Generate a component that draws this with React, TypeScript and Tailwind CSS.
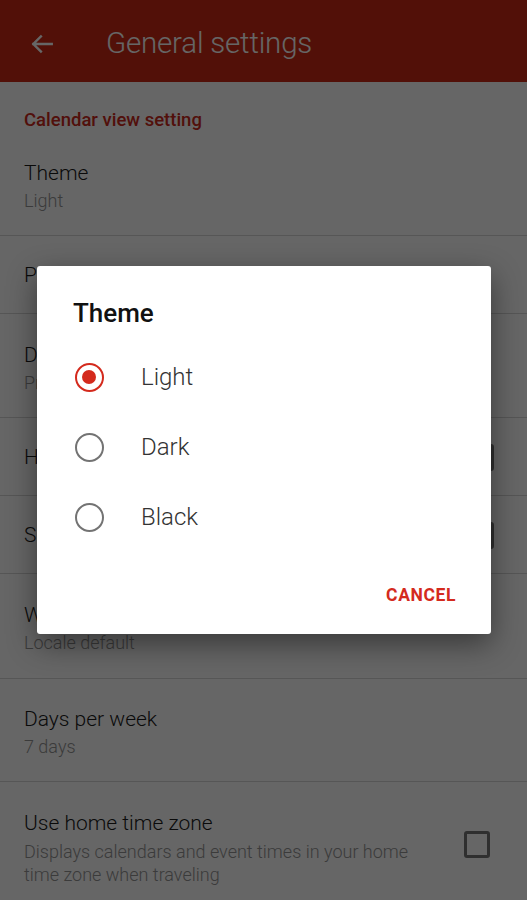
import React from "react";

const font = { fontFamily: "Roboto, 'Liberation Sans', Arial, sans-serif" };

function Row({ title, sub, check, tall }: { title: string; sub?: string; check?: boolean; tall?: string }) {
  return (
    <div className={`flex items-center border-b border-[#d6d6d6] px-6 ${sub ? "pt-[6px]" : "pt-[1px]"} ${tall ?? (sub ? "h-[103px]" : "h-[78px]")}`}>
      <div className="flex flex-1 flex-col justify-center">
        <div className="text-[21px] font-light leading-[28px] text-[#1a1a1a]">{title}</div>
        {sub && <div className="text-[18px] font-light leading-[28px] text-[#949494]">{sub}</div>}
      </div>
      {check && <div className="ml-4 mr-[9px] h-[27px] w-[26px] rounded-[3px] border-[3px] border-[#757575]" />}
    </div>
  );
}

function Radio({ selected, label }: { selected?: boolean; label: string }) {
  return (
    <div className="flex h-[70px] items-center">
      <div className="ml-[37px] flex w-[30px] justify-center">
        {selected ? (
          <div className="flex h-[29px] w-[29px] items-center justify-center rounded-full border-[2.5px] border-[#d42a1d]">
            <div className="h-[14px] w-[14px] rounded-full bg-[#d42a1d]" />
          </div>
        ) : (
          <div className="h-[29px] w-[29px] rounded-full border-[2.5px] border-[#737373]" />
        )}
      </div>
      <div className="ml-[37px] text-[24px] font-light text-[#333]">{label}</div>
    </div>
  );
}

export default function App() {
  return (
    <div className="relative h-[900px] w-[527px] overflow-hidden bg-white" style={font}>
      <div className="flex h-[82px] items-center bg-[#cd2a14] pt-[5px] text-white">
        <svg className="ml-[29px]" width="26" height="26" viewBox="0 0 24 24" fill="none" stroke="white" strokeWidth="2.2" strokeLinecap="square">
          <path d="M21 12H4M11 5l-7 7 7 7" />
        </svg>
        <div className="ml-[51px] text-[29.5px] font-light tracking-[-0.2px]">General settings</div>
      </div>
      <div className="flex h-[51px] items-end px-6 pb-0">
        <div className="text-[18.5px] font-medium leading-[26px] text-[#cc2a1c]">Calendar view setting</div>
      </div>
      <Row title="Theme" sub="Light" />
      <Row title="Primary calendar" />
      <Row title="Default view" sub="Previous view" tall="h-[104px]" />
      <Row title="Hide declined events" check />
      <Row title="Show week number" check />
      <Row title="Week start" sub="Locale default" tall="h-[105px]" />
      <Row title="Days per week" sub="7 days" />
      <div className="flex h-[116px] items-start px-6 pt-[27px]">
        <div className="flex flex-1 flex-col">
          <div className="text-[21px] font-light leading-[28px] text-[#1a1a1a]">Use home time zone</div>
          <div className="mt-[2.5px] text-[18px] font-light leading-[23px] text-[#949494]">
            Displays calendars and event times in your home
            <br />
            time zone when traveling
          </div>
        </div>
        <div className="ml-4 mr-[13px] mt-[22px] h-[27px] w-[26px] rounded-[3px] border-[3px] border-[#757575]" />
      </div>

      <div className="absolute inset-0 bg-black/60" />

      <div className="absolute left-[37px] top-[266px] flex h-[368px] w-[454px] flex-col rounded-[3px] bg-white shadow-[0_10px_30px_rgba(0,0,0,0.45)]">
        <div className="ml-[36px] mt-[31px] text-[26px] font-medium leading-[32px] text-[#111]">Theme</div>
        <div className="mt-[13px]">
          <Radio selected label="Light" />
          <Radio label="Dark" />
          <Radio label="Black" />
        </div>
        <div className="mr-[35px] mt-[30px] flex justify-end">
          <div className="text-[17.5px] font-bold tracking-[0.6px] text-[#d42a1d]">CANCEL</div>
        </div>
      </div>
    </div>
  );
}
